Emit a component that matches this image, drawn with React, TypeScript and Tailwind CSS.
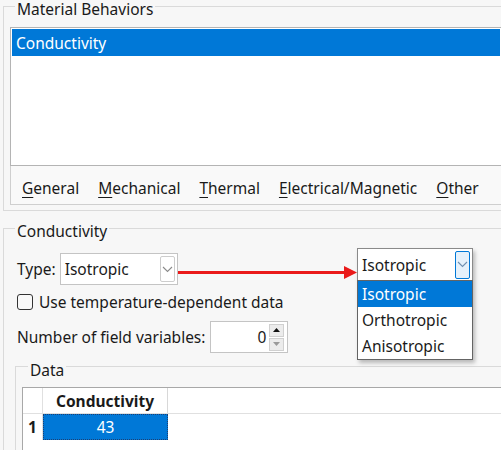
import React from "react";

function Chevron({ color = "#8a8a8a" }: { color?: string }) {
  return (
    <svg width="11" height="7" viewBox="0 0 11 7">
      <polyline points="1,1 5.5,5.5 10,1" fill="none" stroke={color} strokeWidth="1.1" />
    </svg>
  );
}

function Mn({ k, rest }: { k: string; rest: string }) {
  return (
    <span className="whitespace-nowrap">
      <span className="underline underline-offset-[3px] decoration-[1px]">{k}</span>
      {rest}
    </span>
  );
}

export default function App() {
  return (
    <div className="relative w-[501px] h-[450px] overflow-hidden bg-[#f7f7f7] font-['Noto_Sans',sans-serif] text-[15.5px] text-[#1a1a1a]">
      <div className="pl-[3px] pt-[6px]">
        {/* Material Behaviors group */}
        <div className="h-[205px] border-l border-t border-b border-[#dadada]">
          <div className="-mt-[7px] ml-[11px] px-[2px] w-fit bg-[#f7f7f7] leading-[18px]">Material Behaviors</div>
          <div className="mt-[9px] ml-[6px] h-[139px] border-l border-t border-b border-[#b4b4b4] bg-white p-[1px]">
            <div className="h-[27px] bg-[#0078d7] text-white pl-[4px] flex items-center leading-[20px]">Conductivity</div>
          </div>
          <div className="ml-[6px] h-[39px] border-l border-b border-[#cfcfcf] bg-[#f9f9f9] flex items-center pt-[6px] pl-[11px] gap-[19px] leading-[20px]">
            <Mn k="G" rest="eneral" />
            <Mn k="M" rest="echanical" />
            <Mn k="T" rest="hermal" />
            <Mn k="E" rest="lectrical/Magnetic" />
            <Mn k="O" rest="ther" />
          </div>
        </div>

        {/* Conductivity group */}
        <div className="mt-[17px] h-[300px] border-l border-t border-[#dadada]">
          <div className="-mt-[7px] ml-[11px] px-[2px] w-fit bg-[#f7f7f7] leading-[18px]">Conductivity</div>

          <div className="mt-[13px] pl-[13px] flex items-center gap-[4px] leading-[20px]">
            <span>Type:</span>
            <div className="w-[118px] h-[32px] border border-[#c4c4c4] bg-white flex items-center justify-between pl-[4px] pr-[2px]">
              <span>Isotropic</span>
              <div className="w-[15px] h-[26px] border border-[#cdcdcd] rounded-[2px] bg-white flex items-center justify-center">
                <Chevron />
              </div>
            </div>
          </div>

          <div className="mt-[7px] pl-[13px] h-[20px] flex items-center gap-[6px] leading-[20px]">
            <div className="w-[16px] h-[16px] rounded-[3px] border border-[#333333] bg-[#f9f9f9]" />
            <span>Use temperature-dependent data</span>
          </div>

          <div className="mt-[9px] pl-[13px] flex items-center gap-[5px] leading-[20px]">
            <span>Number of field variables:</span>
            <div className="w-[78px] h-[32px] border border-[#c4c4c4] bg-white flex items-center justify-end pr-[3px] gap-[3px]">
              <span>0</span>
              <div className="flex flex-col gap-[1px]">
                <div className="w-[15px] h-[13px] bg-[#ececec] border border-[#d0d0d0] flex items-center justify-center">
                  <svg width="7" height="4" viewBox="0 0 7 4"><polygon points="0,4 3.5,0 7,4" fill="#111" /></svg>
                </div>
                <div className="w-[15px] h-[13px] bg-[#ececec] border border-[#d0d0d0] flex items-center justify-center">
                  <svg width="7" height="4" viewBox="0 0 7 4"><polygon points="0,0 3.5,4 7,0" fill="#9a9a9a" /></svg>
                </div>
              </div>
            </div>
          </div>

          {/* Data group */}
          <div className="mt-[13px] ml-[11px] h-[120px] border-l border-t border-[#dadada]">
            <div className="-mt-[6px] ml-[12px] px-[2px] w-fit bg-[#f7f7f7] leading-[18px]">Data</div>
            <div className="mt-[8px] ml-[6px] h-[80px] border-l border-t border-[#a8a8a8] bg-white">
              <div className="flex h-[26px] border-b border-[#e0e0e0]">
                <div className="w-[20px] border-r border-[#e0e0e0]" />
                <div className="w-[125px] border-r border-[#d8d8d8] flex items-center justify-center font-bold leading-[20px]">Conductivity</div>
              </div>
              <div className="flex h-[26px]">
                <div className="w-[20px] border-r border-[#e0e0e0] flex items-center justify-center font-bold leading-[20px]">1</div>
                <div className="w-[125px] border border-dotted border-[#1c3f73] bg-[#0078d7] text-white flex items-center justify-center leading-[20px]">43</div>
              </div>
            </div>
          </div>
        </div>
      </div>

      {/* Red arrow annotation */}
      <div className="absolute left-[178px] top-[271px] w-[168px] h-[3px] bg-[#ea1a1a]" />
      <svg className="absolute left-[344px] top-[266px]" width="13" height="13" viewBox="0 0 13 13">
        <polygon points="0,0 13,6.5 0,13" fill="#ea1a1a" />
      </svg>

      {/* Open dropdown */}
      <div className="absolute left-[357px] top-[248px] w-[116px] leading-[20px] shadow-[2px_3px_4px_rgba(0,0,0,0.25)]">
        <div className="h-[33px] border border-[#8a8a8a] bg-white flex items-center justify-between pl-[4px] pr-[2px]">
          <span>Isotropic</span>
          <div className="w-[15px] h-[28px] border border-[#0078d7] rounded-[2px] bg-[#e5f1fb] flex items-center justify-center">
            <Chevron color="#6f8fb0" />
          </div>
        </div>
        <div className="-mt-[1px] border border-[#646464] bg-white">
          <div className="h-[26px] bg-[#0078d7] text-white flex items-center pl-[4px]">Isotropic</div>
          <div className="h-[26px] flex items-center pl-[4px]">Orthotropic</div>
          <div className="h-[26px] flex items-center pl-[4px]">Anisotropic</div>
        </div>
      </div>
    </div>
  );
}
